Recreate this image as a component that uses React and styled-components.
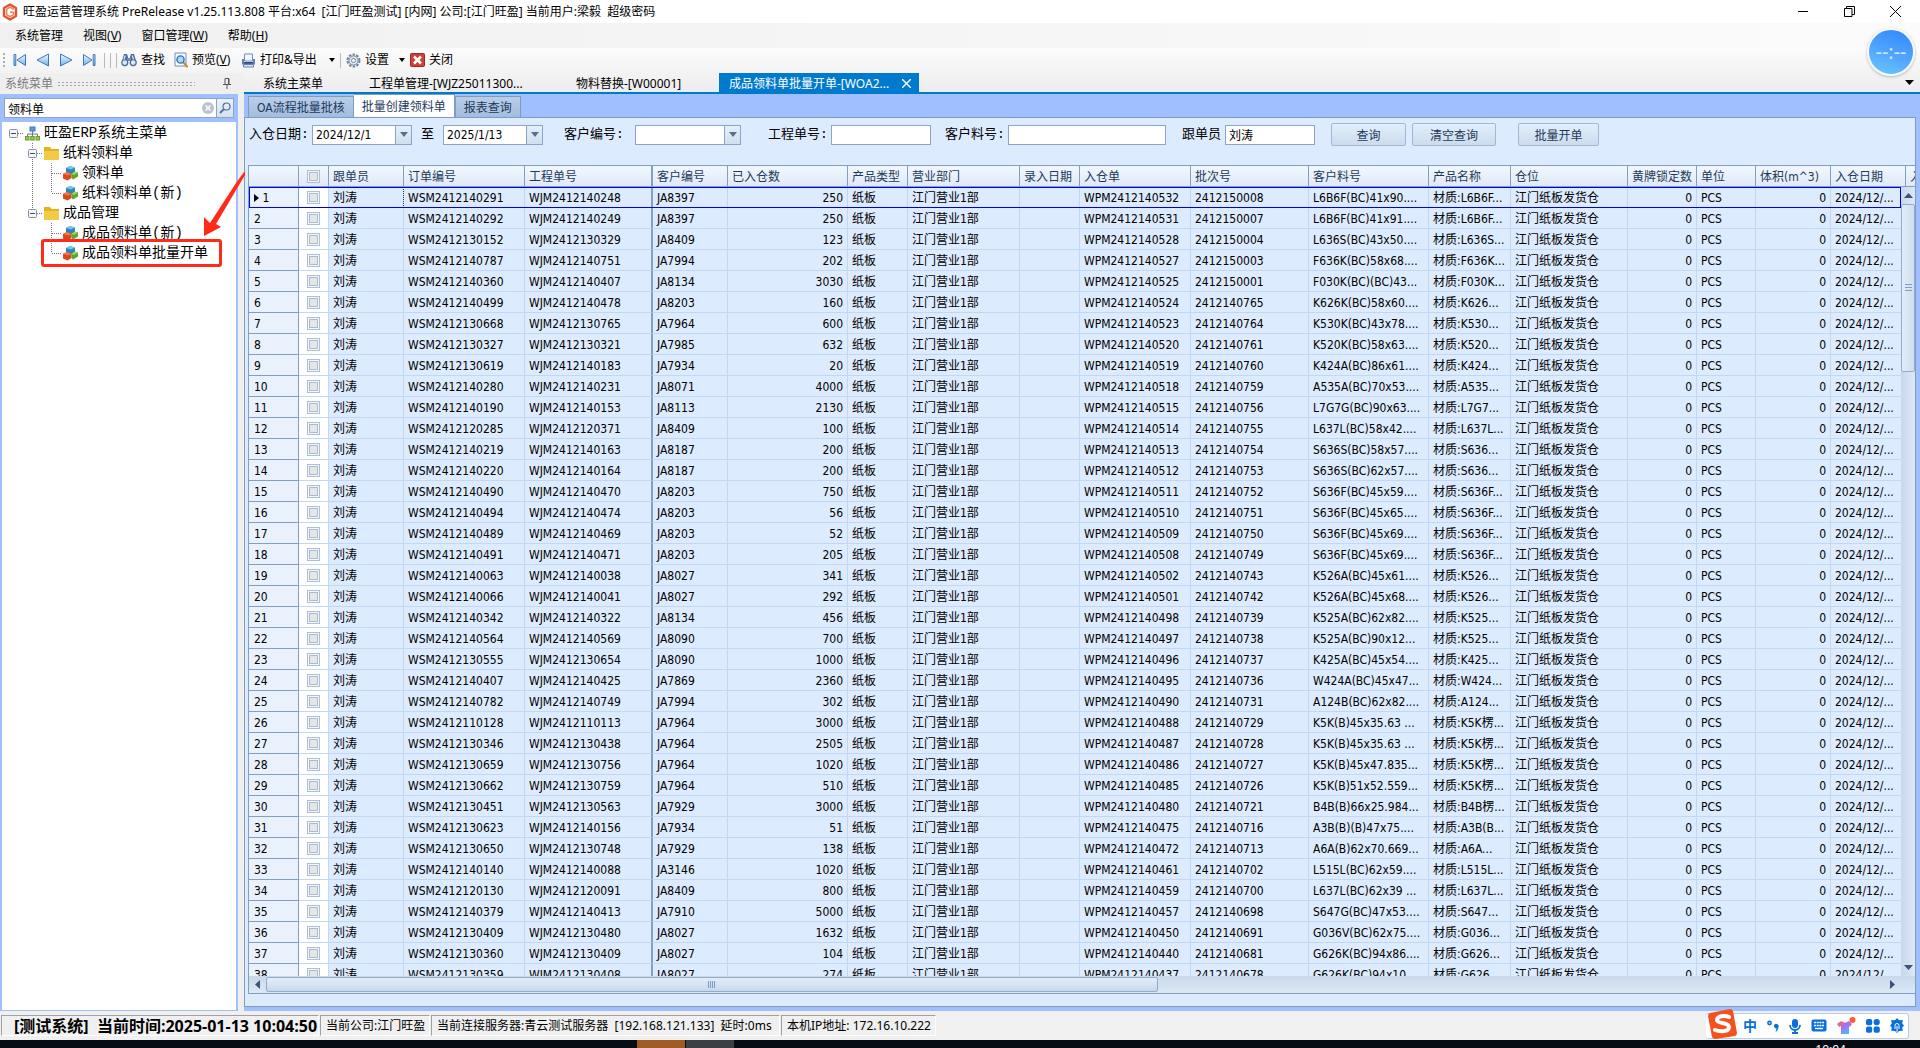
import React from "react";
import styled, { createGlobalStyle, css } from "styled-components";

const UI_FONT = `"Noto Sans", "Noto Sans CJK SC", sans-serif`;
const GRID_FONT = `"DejaVu Sans Condensed", "Noto Sans CJK SC", sans-serif`;
const SONG_FONT = `"Liberation Mono", "Noto Sans CJK SC", monospace`;

// column widths, the date column takes what is left
const widths = [50, 30, 75, 121, 128, 75, 120, 60, 112, 60, 111, 118, 120, 82, 117, 69, 59, 75];

const headers = [
  "跟单员",
  "订单编号",
  "工程单号",
  "客户编号",
  "已入仓数",
  "产品类型",
  "营业部门",
  "录入日期",
  "入仓单",
  "批次号",
  "客户料号",
  "产品名称",
  "仓位",
  "黄牌锁定数",
  "单位",
  "体积(m^3)",
  "入仓日期",
  "入",
];

// order, project, customer, qty, receipt, batch, part, product
const rows = [
  ["2412140291", "2412140248", "8397", 250, "532", "2412150008", "L6B6F(BC)41x90....", "L6B6F..."],
  ["2412140292", "2412140249", "8397", 250, "531", "2412150007", "L6B6F(BC)41x91....", "L6B6F..."],
  ["2412130152", "2412130329", "8409", 123, "528", "2412150004", "L636S(BC)43x50....", "L636S..."],
  ["2412140787", "2412140751", "7994", 202, "527", "2412150003", "F636K(BC)58x68....", "F636K..."],
  ["2412140360", "2412140407", "8134", 3030, "525", "2412150001", "F030K(BC)(BC)43...", "F030K..."],
  ["2412140499", "2412140478", "8203", 160, "524", "2412140765", "K626K(BC)58x60....", "K626..."],
  ["2412130668", "2412130765", "7964", 600, "523", "2412140764", "K530K(BC)43x78....", "K530..."],
  ["2412130327", "2412130321", "7985", 632, "520", "2412140761", "K520K(BC)58x63....", "K520..."],
  ["2412130619", "2412140183", "7934", 20, "519", "2412140760", "K424A(BC)86x61....", "K424..."],
  ["2412140280", "2412140231", "8071", 4000, "518", "2412140759", "A535A(BC)70x53....", "A535..."],
  ["2412140190", "2412140153", "8113", 2130, "515", "2412140756", "L7G7G(BC)90x63....", "L7G7..."],
  ["2412120285", "2412120371", "8409", 100, "514", "2412140755", "L637L(BC)58x42....", "L637L..."],
  ["2412140219", "2412140163", "8187", 200, "513", "2412140754", "S636S(BC)58x57....", "S636..."],
  ["2412140220", "2412140164", "8187", 200, "512", "2412140753", "S636S(BC)62x57....", "S636..."],
  ["2412140490", "2412140470", "8203", 750, "511", "2412140752", "S636F(BC)45x59....", "S636F..."],
  ["2412140494", "2412140474", "8203", 56, "510", "2412140751", "S636F(BC)45x65....", "S636F..."],
  ["2412140489", "2412140469", "8203", 52, "509", "2412140750", "S636F(BC)45x69....", "S636F..."],
  ["2412140491", "2412140471", "8203", 205, "508", "2412140749", "S636F(BC)45x69....", "S636F..."],
  ["2412140063", "2412140038", "8027", 341, "502", "2412140743", "K526A(BC)45x61....", "K526..."],
  ["2412140066", "2412140041", "8027", 292, "501", "2412140742", "K526A(BC)45x68....", "K526..."],
  ["2412140342", "2412140322", "8134", 456, "498", "2412140739", "K525A(BC)62x82....", "K525..."],
  ["2412140564", "2412140569", "8090", 700, "497", "2412140738", "K525A(BC)90x12...", "K525..."],
  ["2412130555", "2412130654", "8090", 1000, "496", "2412140737", "K425A(BC)45x54....", "K425..."],
  ["2412140407", "2412140425", "7869", 2360, "495", "2412140736", "W424A(BC)45x47...", "W424..."],
  ["2412140782", "2412140749", "7994", 302, "490", "2412140731", "A124B(BC)62x82....", "A124..."],
  ["2412110128", "2412110113", "7964", 3000, "488", "2412140729", "K5K(B)45x35.63 ...", "K5K楞..."],
  ["2412130346", "2412130438", "7964", 2505, "487", "2412140728", "K5K(B)45x35.63 ...", "K5K楞..."],
  ["2412130659", "2412130756", "7964", 1020, "486", "2412140727", "K5K(B)45x47.835...", "K5K楞..."],
  ["2412130662", "2412130759", "7964", 510, "485", "2412140726", "K5K(B)51x52.559...", "K5K楞..."],
  ["2412130451", "2412130563", "7929", 3000, "480", "2412140721", "B4B(B)66x25.984...", "B4B楞..."],
  ["2412130623", "2412140156", "7934", 51, "475", "2412140716", "A3B(B)(B)47x75....", "A3B(B..."],
  ["2412130650", "2412130748", "7929", 138, "472", "2412140713", "A6A(B)62x70.669...", "A6A..."],
  ["2412140140", "2412140088", "3146", 1020, "461", "2412140702", "L515L(BC)62x59....", "L515L..."],
  ["2412120130", "2412120091", "8409", 800, "459", "2412140700", "L637L(BC)62x39 ...", "L637L..."],
  ["2412140379", "2412140413", "7910", 5000, "457", "2412140698", "S647G(BC)47x53....", "S647..."],
  ["2412130409", "2412130480", "8027", 1632, "450", "2412140691", "G036V(BC)62x75....", "G036..."],
  ["2412130360", "2412130409", "8027", 104, "440", "2412140681", "G626K(BC)94x86....", "G626..."],
  ["2412130359", "2412130408", "8027", 274, "437", "2412140678", "G626K(BC)94x10...", "G626..."],
];

const tree = [
  { cells: ["toggleRoot"], icon: "root", text: "旺盈ERP系统主菜单" },
  { cells: ["none", "toggle"], icon: "folder", text: "纸料领料单" },
  { cells: ["none", "pass", "tee"], icon: "form", text: "领料单" },
  { cells: ["none", "pass", "last"], icon: "form", text: "纸料领料单(新)" },
  { cells: ["none", "toggleLast"], icon: "folder", text: "成品管理" },
  { cells: ["none", "none", "tee"], icon: "form", text: "成品领料单(新)" },
  { cells: ["none", "none", "last"], icon: "form", text: "成品领料单批量开单" },
];

/* ---------- icons ---------- */

const AppLogo = () => (
  <svg width="16" height="18" viewBox="0 0 16 18" fill="none">
    <path d="M8 1.5 14 5v8l-6 3.5L2 13V5z" stroke="#e2562f" strokeWidth="2.4" strokeLinejoin="round" />
    <path d="M12 6.2 8 4.2 4.6 6.4v5.2L8 13.6l3.6-2V9.4L8 9" stroke="#f0805a" strokeWidth="1.6" />
  </svg>
);

const NavIcon = ({ kind }) => (
  <svg width="14" height="14" viewBox="0 0 14 14">
    <defs>
      <linearGradient id={"nav" + kind} x1="0" y1="0" x2="0" y2="1">
        <stop offset="0" stopColor="#f2f9ff" />
        <stop offset="1" stopColor="#6fb1ea" />
      </linearGradient>
    </defs>
    <g fill={`url(#nav${kind})`} stroke="#3a78bd" strokeLinejoin="round">
      {kind === "first" && <path d="M1 1.5h1.8v11H1zM12.5 1.5v11L4 7z" />}
      {kind === "prev" && <path d="M12.5 1v12L1 7z" />}
      {kind === "next" && <path d="M1.5 1v12L13 7z" />}
      {kind === "lastPage" && <path d="M11.2 1.5H13v11h-1.8zM1.5 1.5v11L10 7z" />}
    </g>
  </svg>
);

const FindIcon = () => (
  <svg width="16" height="14" viewBox="0 0 16 14">
    <path d="M3 1h3l1 3v7H1V8zM13 1h-3L9 4v7h6V8z" fill="#4a6aa0" />
    <path d="M6 5h4v3H6z" fill="#6d8abb" />
    <circle cx="3.8" cy="9.6" r="3" fill="#dbe7f7" stroke="#4a669a" strokeWidth="1.2" />
    <circle cx="12.2" cy="9.6" r="3" fill="#dbe7f7" stroke="#4a669a" strokeWidth="1.2" />
    <path d="M4.2 2.5 3 6.500M11.300 2.500l1.2 4" stroke="#d5e2f5" strokeWidth="1.300" />
  </svg>
);

const PreviewIcon = () => (
  <svg width="14" height="16" viewBox="0 0 14 16">
    <path d="M1 1h11v13H1z" fill="#fbfdff" stroke="#6d8fc0" />
    <path d="m9 10 4 4.5" stroke="#c98a3a" strokeWidth="2.2" strokeLinecap="round" />
    <circle cx="6.5" cy="7.5" r="3.6" fill="#a9d8f8" stroke="#2f6fb4" strokeWidth="1.4" />
  </svg>
);

const PrintIcon = () => (
  <svg width="15" height="15" viewBox="0 0 15 15">
    <path d="M3.5 1h8v7h-8z" fill="#f4f8fd" stroke="#6d8fc0" />
    <path d="M1 6h2v3h9V6h2v5.5H1z" fill="#6482b8" />
    <path d="M3 9h9v1.5H3z" fill="#2f4677" />
    <path d="M2.5 11.5h10v2.5h-10z" fill="#dce8f7" stroke="#6482b8" />
  </svg>
);

const GearIcon = () => (
  <svg width="15" height="15" viewBox="0 0 15 15" fill="none">
    <circle cx="7.5" cy="7.5" r="6" stroke="#71839c" strokeWidth="2" strokeDasharray="2.4 1.4" />
    <circle cx="7.5" cy="7.5" r="4.6" fill="#dfe6ef" stroke="#71839c" strokeWidth="1" />
    <circle cx="7.5" cy="7.5" r="2" fill="#fff" stroke="#71839c" />
  </svg>
);

const CloseIcon = () => (
  <svg width="15" height="14" viewBox="0 0 15 14">
    <rect x=".5" y=".5" width="14" height="13" rx="1" fill="#cf4038" stroke="#9a2a25" />
    <path d="m4 3.5 7 7m0-7-7 7" stroke="#fff" strokeWidth="2.6" />
  </svg>
);

const PinIcon = () => (
  <svg width="8" height="11" viewBox="0 0 8 11" fill="none" stroke="#555">
    <path d="M2 .5h4v6H2zM0 6.5h8M4 7v4M5.5 1v5" />
  </svg>
);

const Triangle = ({ dir = "down", color = "#000", w = 6, h = 4 }) => {
  const d = {
    down: `M0 0h${w}L${w / 2} ${h}z`,
    up: `M0 ${h}h${w}L${w / 2} 0z`,
    left: `M${w} 0v${h}L0 ${h / 2}z`,
    right: `M0 0v${h}L${w} ${h / 2}z`,
  };
  return (
    <svg width={w} height={h} viewBox={`0 0 ${w} ${h}`}>
      <path d={d[dir]} fill={color} />
    </svg>
  );
};

const TreeIcon = ({ kind }) => {
  if (kind === "root")
    return (
      <svg width="15" height="15" viewBox="0 0 15 15">
        <path d="M7.5 5v3M2.5 11V8h10v3M7.5 8v3" stroke="#6b7a8c" fill="none" />
        <rect x="5" y="1" width="5" height="4" fill="#5b9bdc" stroke="#3f7cc0" />
        <rect x=".5" y="10.500" width="3.5" height="3.5" fill="#9ccc4e" stroke="#6a9c28" />
        <rect x="5.7" y="10.500" width="3.5" height="3.5" fill="#9ccc4e" stroke="#6a9c28" />
        <rect x="11" y="10.500" width="3.5" height="3.5" fill="#9ccc4e" stroke="#6a9c28" />
      </svg>
    );
  if (kind === "folder")
    return (
      <svg width="15" height="15" viewBox="0 0 15 15">
        <path d="M0 1h6l1.5 2H15v11H0z" fill="#e3b21d" />
        <path d="M0 5h15v9H0z" fill="#f1cb45" />
      </svg>
    );
  return (
    <svg width="15" height="16" viewBox="0 0 15 16">
      <path d="m3 3 4-2 5 1.5v5L8 9.500 3 8z" fill="#2a87b8" />
      <path d="m3 3 4-2 5 1.5-4 2z" fill="#7cc8ea" />
      <path d="m0 9 4-2 4.5 2v4l-4 2.500-4.500-2z" fill="#d9481c" />
      <path d="m0 9 4-2 4.5 2L5 10.500z" fill="#f2774a" />
      <path d="m8.500 9 3-2.500 3.500 1v4L10 14.500 8.500 13z" fill="#5fa52b" />
      <path d="m8.500 9 3-2.500 3.500 1-4 2.500z" fill="#9ad35c" />
    </svg>
  );
};

const Guide = ({ kind }) => {
  const toggle = kind.startsWith("toggle");
  return (
    <svg width="19" height="20" viewBox="0 0 19 20" fill="none">
      <g stroke="#777" strokeDasharray="1 1">
        {["pass", "tee", "toggle"].includes(kind) && <path d="M9.5 0v20" />}
        {["last", "toggleLast"].includes(kind) && <path d="M9.5 0v10" />}
        {(toggle || kind === "tee" || kind === "last") && <path d="M10 10.5h9" />}
      </g>
      {toggle && (
        <>
          <rect x="5.5" y="6.5" width="8" height="8" rx="1" fill="#f6f6f6" stroke="#8a8f98" />
          <path d="M7 10.5h5" stroke="#2b4a9c" />
        </>
      )}
    </svg>
  );
};

/* ---------- page ---------- */

export default function App() {
  return (
    <>
      <GlobalStyle />
      <Window>
        <TitleBar>
          <AppLogo />
          <Title>
            旺盈运营管理系统 PreRelease v1.25.113.808 平台:x64&nbsp; [江门旺盈测试] [内网] 公司:[江门旺盈] 当前用户:梁毅&nbsp; 超级密码
          </Title>
          <WinButton aria-label="最小化">
            <svg width="11" height="11" stroke="#000"><path d="M0 5.5h10" /></svg>
          </WinButton>
          <WinButton aria-label="还原">
            <svg width="11" height="11" fill="none" stroke="#000"><path d="M.5 2.5h7.5v8H.5zM2.5 2.5v-2h8v8H8" /></svg>
          </WinButton>
          <WinButton aria-label="关闭">
            <svg width="11" height="11" fill="none" stroke="#000"><path d="m0 0 11 11M11 0 0 11" /></svg>
          </WinButton>
        </TitleBar>

        <MenuBar>
          <MenuItem>系统管理</MenuItem>
          <MenuItem>视图(<u>V</u>)</MenuItem>
          <MenuItem>窗口管理(<u>W</u>)</MenuItem>
          <MenuItem>帮助(<u>H</u>)</MenuItem>
        </MenuBar>

        <ToolBar>
          <Grip />
          <NavGroup>
            {["first", "prev", "next", "lastPage"].map((k) => (
              <ToolButton key={k} aria-label={k}>
                <NavIcon kind={k} />
              </ToolButton>
            ))}
          </NavGroup>
          <Separators>
            <Separator />
            <Separator />
            <Separator />
          </Separators>
          <ToolButton $w={53}><FindIcon />查找</ToolButton>
          <ToolButton $w={67}><PreviewIcon /><span>预览(<u>V</u>)</span></ToolButton>
          <ToolButton $w={94}><PrintIcon />打印&amp;导出<Push /><Triangle /></ToolButton>
          <ToolGap />
          <Separator />
          <ToolGap />
          <ToolButton $w={59}><GearIcon />设置<Push /><Triangle /></ToolButton>
          <ToolGap />
          <ToolButton><CloseIcon />关闭</ToolButton>
          <Clock>--:--</Clock>
        </ToolBar>

        <Workspace>
          <Sidebar>
            <SideHead>
              系统菜单
              <Dots />
              <PinIcon />
            </SideHead>
            <SideBody>
              <Search>
                <SearchInput aria-label="搜索菜单" defaultValue="领料单" />
                <ClearButton aria-label="清除">
                  <svg width="12" height="12" viewBox="0 0 12 12">
                    <circle cx="6" cy="6" r="6" fill="#bcc3d0" />
                    <path d="m3.5 3.5 5 5m0-5-5 5" stroke="#fff" strokeWidth="1.4" />
                  </svg>
                </ClearButton>
                <SearchButton aria-label="搜索">
                  <svg width="12" height="12" viewBox="0 0 12 12" fill="none" stroke="#51719f">
                    <circle cx="7.5" cy="4.5" r="3.5" strokeWidth="1.2" />
                    <path d="M5 7 1 11" strokeWidth="2" />
                  </svg>
                </SearchButton>
              </Search>
              <Tree>
                {tree.map((n) => (
                  <TreeRow key={n.text}>
                    {n.cells.map((c, i) =>
                      c.startsWith("toggle") ? (
                        <Toggle key={i} aria-label={"折叠" + n.text}><Guide kind={c} /></Toggle>
                      ) : (
                        <Guide key={i} kind={c} />
                      )
                    )}
                    <TreeLabel><TreeIcon kind={n.icon} />{n.text}</TreeLabel>
                  </TreeRow>
                ))}
                <Highlight />
                <Arrow width="41" height="66" viewBox="0 0 41 66">
                  <path d="M41 0h-1L32 11 6 51 0 45v19l17-9-5-3L41 3z" fill="#ff2a1a" />
                </Arrow>
              </Tree>
            </SideBody>
          </Sidebar>

          <Main>
            <DocTabs>
              <DocTab $w={106}>系统主菜单</DocTab>
              <DocTab $w={207}>工程单管理-[WJZ25011300...</DocTab>
              <DocTab $w={153}>物料替换-[W00001]</DocTab>
              <DocTab $w={200} $active>
                成品领料单批量开单-[WOA2...
                <Push />
                <svg width="9" height="9" stroke="#fff" strokeWidth="1.4"><path d="m0 0 9 9M9 0 0 9" /></svg>
              </DocTab>
              <Push />
              <Triangle w={9} h={5} />
            </DocTabs>
            <SubTabs>
              <SubTab>OA流程批量批核</SubTab>
              <SubTab $active>批量创建领料单</SubTab>
              <SubTab>报表查询</SubTab>
            </SubTabs>
            <Panel>
              <Filters>
                <Label htmlFor="from" $w={63}>入仓日期:</Label>
                <Combo $w={100}>
                  <Input id="from" defaultValue="2024/12/1" />
                  <DropButton aria-label="选择开始日期"><Triangle color="#5b6f92" w={8} h={5} /></DropButton>
                </Combo>
                <Label htmlFor="to" $w={22} $gap={9}>至</Label>
                <Combo $w={100}>
                  <Input id="to" defaultValue="2025/1/13" />
                  <DropButton aria-label="选择结束日期"><Triangle color="#5b6f92" w={8} h={5} /></DropButton>
                </Combo>
                <Label htmlFor="cust" $w={71} $gap={21}>客户编号:</Label>
                <Combo $w={106}>
                  <Select id="cust"><option></option></Select>
                  <DropMark><Triangle color="#5b6f92" w={8} h={5} /></DropMark>
                </Combo>
                <Label htmlFor="proj" $w={63} $gap={27}>工程单号:</Label>
                <Combo $w={100}><Input id="proj" /></Combo>
                <Label htmlFor="part" $w={63} $gap={14}>客户料号:</Label>
                <Combo $w={158}><Input id="part" /></Combo>
                <Label htmlFor="clerk" $w={43} $gap={16}>跟单员</Label>
                <Combo $w={90}><Input id="clerk" defaultValue="刘涛" /></Combo>
                <Action $w={75} $gap={16}>查询</Action>
                <Action $w={84} $gap={6}>清空查询</Action>
                <Action $w={81} $gap={22}>批量开单</Action>
              </Filters>
              <Grid />
            </Panel>
          </Main>
        </Workspace>

        <StatusBar>
          <StatusCell $w={318} $bold>[测试系统]&nbsp; 当前时间:2025-01-13 10:04:50</StatusCell>
          <StatusCell $w={110}>当前公司:江门旺盈</StatusCell>
          <StatusCell $w={349}>当前连接服务器:青云测试服务器&nbsp; [192.168.121.133]&nbsp; 延时:0ms</StatusCell>
          <StatusCell $w={155}>本机IP地址: 172.16.10.222</StatusCell>
          <Push />
          <Ime />
        </StatusBar>
        <TaskBar>
          <TaskItem $color="#a05a24" />
          <TaskItem $color="#3c3f44" />
          <TaskTime>10:04</TaskTime>
        </TaskBar>
      </Window>
    </>
  );
}

function Grid() {
  return (
    <GridBox>
      <Table>
        <colgroup>
          {widths.map((w, i) => <Col key={i} $w={w} />)}
          <col />
          <Col $w={9} />
        </colgroup>
        <thead>
          <tr>
            <Th />
            <Th $center><Check type="checkbox" aria-label="全选" /></Th>
            {headers.map((h, i) => (
              <Th key={i} $fixed={i === 2} $end={i === 17}>{h}</Th>
            ))}
          </tr>
        </thead>
      </Table>
      <GridBody>
        <Viewport>
          <Table>
            <colgroup>
              {widths.map((w, i) => <Col key={i} $w={w} />)}
              <col />
            </colgroup>
            <tbody>
              {rows.map((r, i) => (
                <Tr key={i} $current={i === 0}>
                  <RowNo>
                    {i === 0 && <Triangle dir="right" w={5} h={8} />} {i + 1}
                  </RowNo>
                  <CheckCell><Check type="checkbox" aria-label={"选择第" + (i + 1) + "行"} /></CheckCell>
                  <Td $focus={i === 0}>刘涛</Td>
                  <Td>WSM{r[0]}</Td>
                  <Td $fixed>WJM{r[1]}</Td>
                  <Td>JA{r[2]}</Td>
                  <Td $right>{r[3]}</Td>
                  <Td>纸板</Td>
                  <Td>江门营业1部</Td>
                  <Td />
                  <Td>WPM2412140{r[4]}</Td>
                  <Td>{r[5]}</Td>
                  <Td>{r[6]}</Td>
                  <Td>材质:{r[7]}</Td>
                  <Td>江门纸板发货仓</Td>
                  <Td $right>0</Td>
                  <Td>PCS</Td>
                  <Td $right>0</Td>
                  <Td $end>2024/12/...</Td>
                </Tr>
              ))}
            </tbody>
          </Table>
        </Viewport>
        <VScroll>
          <ScrollEnd><Triangle dir="up" color="#3f5277" w={9} h={5} /></ScrollEnd>
          <VThumb>
            <svg width="7" height="8" stroke="#7f9cc4"><path d="M0 .5h7M0 3.5h7M0 6.5h7" /></svg>
          </VThumb>
          <Push />
          <ScrollEnd><Triangle color="#3f5277" w={9} h={5} /></ScrollEnd>
        </VScroll>
      </GridBody>
      <HScroll>
        <ScrollEnd><Triangle dir="left" color="#3f5277" w={5} h={9} /></ScrollEnd>
        <HThumb>
          <svg width="8" height="7" stroke="#7f9cc4"><path d="M.5 0v7M2.5 0v7M4.5 0v7M6.5 0v7" /></svg>
        </HThumb>
        <Push />
        <ScrollEnd><Triangle dir="right" color="#3f5277" w={5} h={9} /></ScrollEnd>
      </HScroll>
    </GridBox>
  );
}

function Ime() {
  return (
    <ImeBar>
      <ImeLogo width="32" height="32" viewBox="0 0 32 32">
        <path d="M4 5 24 1q2 0 3 2l4 22q0 2-2 3L9 31q-2 0-3-2L2 8q0-2 2-3z" fill="#f4511e" />
        <path d="M23 9c-4-2-12-1-12 3s12 2 12 7-9 5-14 3" fill="none" stroke="#fff" strokeWidth="4" strokeLinecap="round" />
      </ImeLogo>
      <span>中</span>
      <svg width="12" height="14" viewBox="0 0 12 14">
        <circle cx="2.5" cy="4" r="1.6" fill="none" stroke="#0a6fdc" strokeWidth="1.6" />
        <path d="M7 6.500a2.300 2.300 0 1 1 4.500 1.500Q11 12 8 13.500q1.500-2 1.500-4A2.500 2.500 0 0 1 7 6.500z" fill="#0a6fdc" />
      </svg>
      <svg width="12" height="16" viewBox="0 0 12 16" fill="none" stroke="#0a6fdc" strokeWidth="1.8">
        <rect x="3" y="1" width="6" height="9" rx="3" fill="#0a6fdc" stroke="none" />
        <path d="M1 7a5 5 0 0 0 10 0M6 12v3M3 15h6" />
      </svg>
      <svg width="16" height="13" viewBox="0 0 16 13">
        <rect x=".5" y=".5" width="15" height="12" rx="2" fill="#0a6fdc" />
        <path d="M3 3.5h10M3 6.5h10" stroke="#fff" strokeWidth="1.6" strokeDasharray="2 .7" />
        <path d="M4 9.5h8" stroke="#fff" strokeWidth="1.4" />
      </svg>
      <svg width="19" height="18" viewBox="0 0 19 18">
        <defs>
          <linearGradient id="shirt" x1="0" y1="0" x2=".7" y2="1">
            <stop offset="0" stopColor="#ff6a3c" />
            <stop offset=".5" stopColor="#b06cf0" />
            <stop offset="1" stopColor="#3fc4ff" />
          </linearGradient>
        </defs>
        <path d="m0 7 4-3 2 1q2 1 4 0l2-1 3 3-2 3-1-1v8H4V9l-2 1z" fill="url(#shirt)" />
        <circle cx="15.5" cy="3" r="3" fill="#ff5a36" />
      </svg>
      <svg width="14" height="14" viewBox="0 0 14 14" fill="#0a6fdc">
        <rect width="6.2" height="6.2" rx="1.8" />
        <rect x="7.6" width="6.2" height="6.2" rx="3" />
        <rect y="7.6" width="6.2" height="6.2" rx="1.8" />
        <rect x="7.6" y="7.6" width="6.2" height="6.2" rx="1.8" />
      </svg>
      <svg width="14" height="15" viewBox="0 0 14 15">
        <path d="m7 0 2 2.2 3.8-.2-.6 3.5L14 7.5l-1.8 2 .6 3.3L9 13l-2 2-2-2-3.8-.2.6-3.3L0 7.5l1.8-2L1.2 2 5 2.2z" fill="#0a6fdc" />
        <path d="M5 11V7.500a2 2 0 1 1 4 0V11M7 8v6" stroke="#fff" strokeWidth="1" fill="none" />
      </svg>
    </ImeBar>
  );
}

// styling
const GlobalStyle = createGlobalStyle`
  * {
    box-sizing: border-box;
  }
  body {
    margin: 0;
    overflow: hidden;
    font: 12px/16px ${UI_FONT};
    color: #000;
    background: #f0f0f0;
  }
  button {
    border: 0;
    padding: 0;
    background: none;
    font: inherit;
    color: inherit;
  }
  svg {
    display: block;
    flex: none;
  }
`;
const Window = styled.div`
  height: 100vh;
  display: flex;
  flex-direction: column;
  white-space: nowrap;
`;
const Push = styled.span`
  flex: 1;
`;
const TitleBar = styled.header`
  display: flex;
  align-items: center;
  height: 23px;
  padding: 0 2px;
  background: #fff;
`;
const Title = styled.div`
  flex: 1;
  padding-left: 5px;
`;
const WinButton = styled.button`
  width: 46px;
  height: 20px;
  display: flex;
  align-items: center;
  justify-content: center;
`;
const MenuBar = styled.nav`
  display: flex;
  align-items: center;
  gap: 20px;
  height: 25px;
  padding-left: 15px;
  background: linear-gradient(90deg, #f0f0f0, #fbfbfb);
`;
const MenuItem = styled.button``;
const ToolBar = styled.div`
  position: relative;
  display: flex;
  align-items: center;
  height: 25px;
  padding: 0 0 1px 3px;
  background: linear-gradient(#fcfcfc, #f3f3f3);
`;
const Grip = styled.span`
  width: 2px;
  height: 14px;
  margin-right: 8px;
  background: repeating-linear-gradient(#b0b0b0 0 2px, transparent 2px 4px);
`;
const NavGroup = styled.div`
  display: flex;
  gap: 9px;
`;
const Separators = styled.div`
  display: flex;
  gap: 5px;
  padding: 0 4px 0 8px;
`;
const Separator = styled.span`
  width: 1px;
  height: 15px;
  background: #b9b9b9;
`;
const ToolGap = styled.span`
  width: 5px;
`;
const ToolButton = styled.button`
  display: flex;
  align-items: center;
  gap: 4px;
  width: ${(p) => (p.$w ? p.$w + "px" : "auto")};
`;
const Clock = styled.div`
  position: absolute;
  z-index: 2;
  right: 5px;
  top: -20px;
  width: 48px;
  height: 48px;
  border: 2px solid #f4faff;
  border-radius: 50%;
  background: linear-gradient(200deg, #2f86fb, #4fa3ff 50%, #6cc8ff);
  box-shadow: 0 1px 3px #0004;
  color: #cfe9ff;
  font-size: 20px;
  line-height: 44px;
  text-align: center;
`;
const Workspace = styled.div`
  flex: 1;
  min-height: 0;
  display: flex;
  gap: 6px;
  background: #efefef;
`;
const Sidebar = styled.aside`
  width: 238px;
  display: flex;
  flex-direction: column;
`;
const SideHead = styled.div`
  display: flex;
  align-items: center;
  height: 21px;
  padding: 0 7px 0 5px;
  color: #7a7a7a;
`;
const Dots = styled.span`
  flex: 1;
  height: 5px;
  margin: 0 28px 0 4px;
  background: radial-gradient(circle, #a9a9a9 1px, transparent 1px) 0 0 / 4px 3px;
`;
const SideBody = styled.div`
  flex: 1;
  min-height: 0;
  display: flex;
  flex-direction: column;
  gap: 4px;
  padding: 4px 2px 1px;
  background: #a0bfff;
`;
const Search = styled.div`
  display: flex;
  align-items: center;
  height: 20px;
  margin: 0 2px;
  border: 1px solid #8ba4c9;
  background: #fff;
`;
const SearchInput = styled.input`
  flex: 1;
  min-width: 0;
  border: 0;
  padding: 1px 3px 0;
  outline: 0;
  font: 12px ${GRID_FONT};
`;
const ClearButton = styled.button`
  width: 14px;
`;
const SearchButton = styled.button`
  display: flex;
  align-items: center;
  justify-content: center;
  width: 17px;
  height: 18px;
  border-left: 1px solid #8ba4c9;
  background: linear-gradient(#eaf2fb, #d3e1f1);
`;
const Tree = styled.div`
  position: relative;
  flex: 1;
  padding-top: 1px;
  background: #fff;
`;
const TreeRow = styled.div`
  display: flex;
  align-items: center;
  height: 20px;
  padding-left: 2px;
  font: 14px/20px ${SONG_FONT};
`;
const Toggle = styled.button`
  height: 20px;
`;
const TreeLabel = styled.a.attrs({ href: "#" })`
  display: flex;
  align-items: center;
  gap: 4px;
  padding-left: 2px;
  color: #000;
  text-decoration: none;
`;
const Highlight = styled.div`
  position: absolute;
  left: 39px;
  top: 117px;
  width: 181px;
  height: 28px;
  border: 3px solid #ff2a1a;
  border-radius: 3px;
`;
const Arrow = styled.svg`
  position: absolute;
  z-index: 1;
  left: 202px;
  top: 50px;
`;
const Main = styled.main`
  flex: 1;
  min-width: 0;
  display: flex;
  flex-direction: column;
  background: #a0bfff;
`;
const DocTabs = styled.div`
  display: flex;
  align-items: center;
  height: 21px;
  padding: 0 6px 0 9px;
  border-bottom: 2px solid #007acc;
  background: linear-gradient(#f3f3f3, #ededed);
`;
const DocTab = styled.button`
  display: flex;
  align-items: center;
  width: ${(p) => p.$w}px;
  height: 19px;
  padding: 2px 8px 0 10px;
  ${(p) =>
    p.$active &&
    css`
      background: #007acc;
      color: #fff;
    `}
`;
const SubTabs = styled.div`
  display: flex;
  align-items: flex-end;
  height: 23px;
  padding-left: 4px;
`;
const SubTab = styled.button`
  height: ${(p) => (p.$active ? 23 : 21)}px;
  padding: 2px 8px 0;
  border: 1px solid #7f9bc0;
  border-bottom: 0;
  border-left-width: ${(p) => (p.$active ? 0 : 1)}px;
  background: ${(p) => (p.$active ? "#fff" : "linear-gradient(#b9cee8, #a3bddc)")};
  color: #1e395b;
  font: 12px/18px ${GRID_FONT};
  & + &:last-child {
    border-left: 0;
  }
`;
const Panel = styled.section`
  flex: 1;
  min-height: 0;
  display: flex;
  flex-direction: column;
  margin: 0 4px 4px 0;
  padding: 5px 0 12px 3px;
  border: 1px solid #7f9bc0;
  background: #ddebfe;
`;
const Filters = styled.form`
  display: flex;
  align-items: center;
  height: 23px;
  margin-bottom: 19px;
  padding-left: 1px;
`;
const Label = styled.label`
  width: ${(p) => p.$w}px;
  margin-left: ${(p) => p.$gap || 0}px;
  font: 13px/20px ${SONG_FONT};
`;
const Combo = styled.div`
  position: relative;
  display: flex;
  width: ${(p) => p.$w}px;
  height: 20px;
  border: 1px solid #8ba4c9;
  background: #fff;
`;
const Input = styled.input`
  flex: 1;
  min-width: 0;
  border: 0;
  padding: 0 3px;
  outline: 0;
  background: none;
  font: 12px ${GRID_FONT};
`;
const Select = styled.select`
  flex: 1;
  border: 0;
  appearance: none;
  background: none;
`;
const dropBox = css`
  display: flex;
  align-items: center;
  justify-content: center;
  width: 16px;
  height: 18px;
  border-left: 1px solid #8ba4c9;
  background: linear-gradient(#e6effa, #cfdeef);
`;
const DropButton = styled.button`
  ${dropBox}
`;
const DropMark = styled.span`
  ${dropBox}
  position: absolute;
  right: 0;
  pointer-events: none;
`;
const Action = styled.button.attrs({ type: "button" })`
  width: ${(p) => p.$w}px;
  height: 23px;
  margin-left: ${(p) => p.$gap}px;
  border: 1px solid #a3b7d2;
  border-radius: 2px;
  background: linear-gradient(#e3eefb, #cbdcee);
  color: #1e395b;
  font: 12px ${GRID_FONT};
`;
const GridBox = styled.div`
  flex: 1;
  min-height: 0;
  display: flex;
  flex-direction: column;
  border: 1px solid #839fc2;
  border-right: 0;
`;
const GridBody = styled.div`
  flex: 1;
  min-height: 0;
  display: flex;
`;
const Viewport = styled.div`
  flex: 1;
  min-width: 0;
  overflow: hidden;
`;
const Table = styled.table`
  width: 100%;
  flex: none;
  table-layout: fixed;
  border-collapse: separate;
  border-spacing: 0;
  font: 12px/18px ${GRID_FONT};
`;
const Col = styled.col`
  width: ${(p) => p.$w}px;
`;
const Th = styled.th`
  height: 21px;
  padding: 1px 0 0 4px;
  border-right: ${(p) => (p.$fixed ? 2 : 1)}px solid #839fc2;
  border-bottom: 1px solid #839fc2;
  overflow: hidden;
  background: linear-gradient(#f1f7fe, #dfeaf7);
  color: #1e395b;
  font-weight: 400;
  text-align: left;
  ${(p) => p.$end && "border-right: 0;"}
  ${(p) => p.$center && "padding-left: 8px;"}
`;
const Td = styled.td`
  height: 21px;
  padding: 2px 4px 0;
  border-right: 1px solid #c3d7f5;
  border-bottom: 1px solid #c3d7f5;
  overflow: hidden;
  background: #ddebfe;
  text-align: ${(p) => (p.$right ? "right" : "left")};
  ${(p) => p.$fixed && "border-right: 2px solid #839fc2;"}
  ${(p) => p.$end && "border-right: 0; padding-right: 0;"}
  ${(p) => p.$focus && "border-right: 1px dotted #333;"}
`;
const RowNo = styled(Td)`
  padding-left: 5px;
  border-color: #839fc2;
  background: #e9f2fc;
  svg {
    display: inline-block;
  }
`;
const CheckCell = styled(Td)`
  padding: 0 0 0 8px;
  background: #fff;
`;
const Tr = styled.tr`
  ${(p) =>
    p.$current &&
    css`
      outline: 1px solid #0000f0;
      outline-offset: -1px;
    `}
`;
const Check = styled.input`
  display: block;
  appearance: none;
  width: 13px;
  height: 13px;
  margin: 0;
  border: 1px solid #a9bfdf;
  background: #e4e7ea;
  box-shadow: inset 0 0 0 1px #f4f8fd, inset 0 0 0 2px #b4bac3;
`;
const VScroll = styled.div`
  display: flex;
  flex-direction: column;
  width: 14px;
  background: linear-gradient(90deg, #c9d8ea, #dce8f5);
`;
const ScrollEnd = styled.button.attrs({ "aria-label": "滚动" })`
  display: flex;
  align-items: center;
  justify-content: center;
  min-width: 17px;
  min-height: 17px;
  ${VScroll} & {
    min-width: 14px;
  }
`;
const VThumb = styled.div`
  display: flex;
  align-items: center;
  justify-content: center;
  height: 168px;
  border: 1px solid #93abcd;
  border-radius: 2px;
  background: linear-gradient(90deg, #e3edf9, #cfdded);
`;
const HScroll = styled.div`
  display: flex;
  height: 17px;
  padding-right: 14px;
  background: linear-gradient(#c9d8ea, #dce8f5);
`;
const HThumb = styled.div`
  display: flex;
  align-items: center;
  justify-content: center;
  width: 54%;
  height: 15px;
  margin-top: 1px;
  border: 1px solid #93abcd;
  border-radius: 2px;
  background: linear-gradient(#e3edf9, #c8d9ec);
`;
const StatusBar = styled.footer`
  display: flex;
  align-items: center;
  gap: 1px;
  height: 29px;
  padding: 0 11px 0 1px;
  background: #f0f0f0;
`;
const StatusCell = styled.div`
  width: ${(p) => p.$w}px;
  height: 21px;
  padding-left: 5px;
  border: 1px solid #a0a0a0;
  border-right-color: #fff;
  border-bottom-color: #fff;
  line-height: 20px;
  ${(p) =>
    p.$bold &&
    css`
      padding-left: 12px;
      font-family: "Open Sans", "Noto Sans CJK SC", sans-serif;
      font-size: 16px;
      font-weight: 700;
    `}
`;
const ImeBar = styled.div`
  display: flex;
  align-items: center;
  gap: 10px;
  height: 26px;
  padding-right: 4px;
  border: 1px solid #b9cbe6;
  border-left: 0;
  border-radius: 3px;
  background: #fff;
  color: #0a6fdc;
  font-size: 14px;
  font-weight: 700;
`;
const ImeLogo = styled.svg`
  margin: -4px -5px 0 0;
`;
const TaskBar = styled.div`
  display: flex;
  gap: 1px;
  height: 8px;
  padding-left: 637px;
  overflow: hidden;
  background: #060b14;
  color: #fff;
`;
const TaskItem = styled.span`
  width: 48px;
  background: ${(p) => p.$color};
`;
const TaskTime = styled.time`
  margin: 2px 74px 0 auto;
`;
